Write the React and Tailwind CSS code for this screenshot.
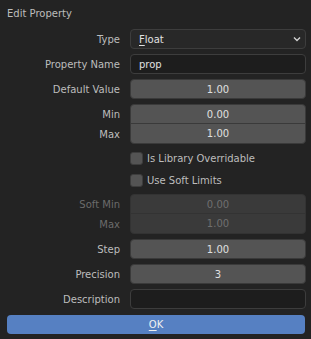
const Label = ({ children, dim }) => (
  <div className={`w-[120px] shrink-0 text-right ${dim ? "text-[#6b6b6b]" : "text-[#bdbdbd]"}`}>{children}</div>
);

const Row = ({ label, children, className = "" }) => (
  <div className={`flex items-center h-5 ${className}`}>
    <Label>{label}</Label>
    <div className="ml-[10px] mr-[5px] flex-1 h-full">{children}</div>
  </div>
);

const NumField = ({ value }) => (
  <div className="h-full rounded-[4px] bg-[#545454] border border-[#3a3a3a] flex items-center justify-center text-[#e0e0e0]">
    {value}
  </div>
);

const TextField = ({ value }) => (
  <div className="h-full rounded-[4px] bg-[#1d1d1d] border border-[#3d3d3d] flex items-center px-2 text-[#e0e0e0]">
    {value}
  </div>
);

const Check = ({ label }) => (
  <div className="flex items-center h-[22px] pl-[130px]">
    <div className="w-[13px] h-[13px] rounded-[3px] bg-[#545454] border border-[#3d3d3d]" />
    <span className="ml-[4px] text-[#bdbdbd]">{label}</span>
  </div>
);

const Pair = ({ a, b, va, vb, dim }) => (
  <div className="flex h-10">
    <div className="flex flex-col">
      <div className="h-5 flex items-center"><Label dim={dim}>{a}</Label></div>
      <div className="h-5 flex items-center"><Label dim={dim}>{b}</Label></div>
    </div>
    <div
      className={`ml-[10px] mr-[5px] flex-1 rounded-[4px] border flex flex-col ${
        dim ? "bg-[#3a3a3a] border-[#333] text-[#6f6f6f]" : "bg-[#545454] border-[#3a3a3a] text-[#e0e0e0]"
      }`}
    >
      <div className={`h-1/2 flex items-center justify-center border-b ${dim ? "border-[#333]" : "border-[#3a3a3a]"}`}>{va}</div>
      <div className="h-1/2 flex items-center justify-center">{vb}</div>
    </div>
  </div>
);

export default function App() {
  return (
    <div className="w-[311px] h-[339px] bg-[#232323] text-[10px] overflow-hidden" style={{ fontFamily: '"DejaVu Sans", sans-serif' }}>
      <div className="h-[29px] flex items-center px-[7px] pb-[2px] text-[#bdbdbd]">Edit Property</div>
      <div className="flex flex-col gap-[5px]">
        <Row label="Type">
          <div className="h-full rounded-[4px] bg-[#282828] border border-[#3d3d3d] flex items-center justify-between pl-2 pr-[4px] text-[#e0e0e0]">
            <span><span className="underline underline-offset-2">F</span>loat</span>
            <svg width="8" height="6" viewBox="0 0 8 6">
              <path d="M1 1.5 L4 4.5 L7 1.5" stroke="#d0d0d0" strokeWidth="1.4" fill="none" />
            </svg>
          </div>
        </Row>
        <Row label="Property Name"><TextField value="prop" /></Row>
        <Row label="Default Value"><NumField value="1.00" /></Row>
        <Pair a="Min" b="Max" va="0.00" vb="1.00" />
      </div>
      <div className="pt-[3px]">
        <Check label="Is Library Overridable" />
        <Check label="Use Soft Limits" />
      </div>
      <div className="flex flex-col gap-[5px] pt-[3px]">
        <Pair a="Soft Min" b="Max" va="0.00" vb="1.00" dim />
        <Row label="Step"><NumField value="1.00" /></Row>
        <Row label="Precision"><NumField value="3" /></Row>
        <Row label="Description"><TextField value="" /></Row>
      </div>
      <div className="px-[7px] pr-[6px] pt-[6px]">
        <div className="h-[19px] rounded-[4px] bg-[#5680c2] flex items-center justify-center text-[#f0f0f0]">
          <span><span className="underline underline-offset-2">O</span>K</span>
        </div>
      </div>
    </div>
  );
}
